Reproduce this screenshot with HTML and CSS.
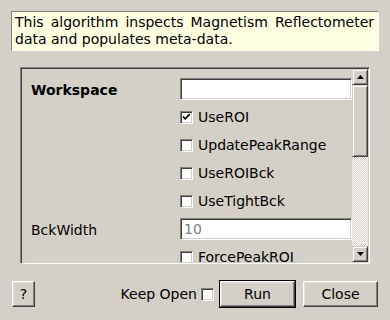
FILE: index.html
```html
<!DOCTYPE html>
<html lang="en">
<head>
	<meta charset="UTF-8">
	<title>Algorithm Dialog</title>
	<link rel="stylesheet" href="styles.css">
</head>
<body>
	<div class="dialog">
		<p class="summary">This algorithm inspects Magnetism Reflectometer data and populates meta-data.</p>

		<div class="props">
			<div class="props-view">
				<div class="prop-grid">
					<div class="prop-label bold">Workspace</div>
					<div class="prop-field"><span class="field"></span></div>

					<div class="prop-label"></div>
					<div class="prop-field">
						<span class="check on"><svg width="9" height="9" viewBox="0 0 9 9"><path d="M1 3.5 L3.2 5.8 L7.8 1.2" fill="none" stroke="#000" stroke-width="1.7"/></svg></span>
						<span class="check-text">UseROI</span>
					</div>

					<div class="prop-label"></div>
					<div class="prop-field"><span class="check"></span><span class="check-text">UpdatePeakRange</span></div>

					<div class="prop-label"></div>
					<div class="prop-field"><span class="check"></span><span class="check-text">UseROIBck</span></div>

					<div class="prop-label"></div>
					<div class="prop-field"><span class="check"></span><span class="check-text">UseTightBck</span></div>

					<div class="prop-label">BckWidth</div>
					<div class="prop-field"><span class="field placeholder">10</span></div>

					<div class="prop-label"></div>
					<div class="prop-field"><span class="check"></span><span class="check-text">ForcePeakROI</span></div>
				</div>
			</div>
			<div class="scrollbar">
				<div class="sb-btn"><svg width="7" height="4" viewBox="0 0 7 4"><polygon points="3.5,0 7,4 0,4" fill="#000"/></svg></div>
				<div class="sb-thumb"></div>
				<div class="sb-track"></div>
				<div class="sb-btn"><svg width="7" height="4" viewBox="0 0 7 4"><polygon points="0,0 7,0 3.5,4" fill="#000"/></svg></div>
			</div>
		</div>

		<div class="actions">
			<span class="btn help">?</span>
			<span class="keep">Keep Open</span>
			<span class="check"></span>
			<span class="default-ring"><span class="btn wide">Run</span></span>
			<span class="btn wide">Close</span>
		</div>
	</div>
</body>
</html>
```

FILE: styles.css
```css
html,body {
	margin:0;
	padding:0;
	background:#d4d0c8;
}

body {
	font-family:"DejaVu Sans",sans-serif;
	font-size:14px;
	color:#000;
}

.dialog {
	display:flex;
	flex-direction:column;
	width:390px;
	height:320px;
}

.summary {
	margin:11px 11px 0 11px;
	padding:2px 4px 2px 3px;
	height:34px;
	line-height:17px;
	background:#ffffe1;
	border:1px solid;
	border-color:#808080 #fff #fff #808080;
	text-align:justify;
	text-align-last:left;
}

.props {
	display:flex;
	margin:16px 20px 0 20px;
	height:193px;
	border:1px solid;
	border-color:#808080 #fff #fff #808080;
	box-shadow:inset 1px 1px #404040,inset -1px -1px #d4d0c8;
	padding:1px;
}

.props-view {
	flex:1;
	overflow:hidden;
}

.prop-grid {
	display:grid;
	grid-template-columns:158px 1fr;
	grid-auto-rows:28px;
	align-items:center;
	padding-top:6px;
}

.prop-label {
	padding-left:9px;
	padding-top:1px;
}

.bold {
	font-weight:bold;
}

.prop-field {
	display:flex;
	align-items:center;
	gap:5px;
}

.field {
	display:block;
	box-sizing:border-box;
	width:100%;
	height:22px;
	padding:0 3px;
	line-height:20px;
	background:#fff;
	border:1px solid;
	border-color:#808080 #fff #fff #808080;
	box-shadow:inset 1px 1px #404040,inset -1px -1px #d4d0c8;
}

.placeholder {
	color:#808080;
}

.check {
	display:flex;
	align-items:center;
	justify-content:center;
	box-sizing:border-box;
	width:13px;
	height:13px;
	flex:none;
	background:#fff;
	border:1px solid;
	border-color:#808080 #fff #fff #808080;
	box-shadow:inset 1px 1px #404040,inset -1px -1px #d4d0c8;
}

.check svg {
	display:block;
}

.scrollbar {
	display:flex;
	flex-direction:column;
	width:16px;
}

.sb-btn,.sb-thumb {
	box-sizing:border-box;
	border:1px solid;
	border-color:#d4d0c8 #404040 #404040 #d4d0c8;
	box-shadow:inset 1px 1px #fff,inset -1px -1px #808080;
	background:#d4d0c8;
}

.sb-btn {
	display:flex;
	align-items:center;
	justify-content:center;
	height:16px;
}

.sb-btn svg {
	display:block;
}

.sb-thumb {
	height:72px;
}

.sb-track {
	flex:1;
	background:repeating-conic-gradient(#fff 0 25%,#d4d0c8 0 50%) 0 0/2px 2px;
}

.actions {
	display:flex;
	align-items:center;
	height:28px;
	margin-top:16px;
	padding:0 12px;
}

.btn {
	display:flex;
	align-items:center;
	justify-content:center;
	box-sizing:border-box;
	height:26px;
	border:1px solid;
	border-color:#fff #404040 #404040 #fff;
	box-shadow:inset -1px -1px #808080,inset 1px 1px #e4e0d8;
	background:#d4d0c8;
}

.help {
	width:23px;
	margin-right:auto;
}

.keep {
	margin-right:4px;
}

.default-ring {
	display:flex;
	border:1px solid #000;
	margin-left:5px;
}

.wide {
	width:75px;
}

.default-ring + .btn {
	margin-left:7px;
}
```
